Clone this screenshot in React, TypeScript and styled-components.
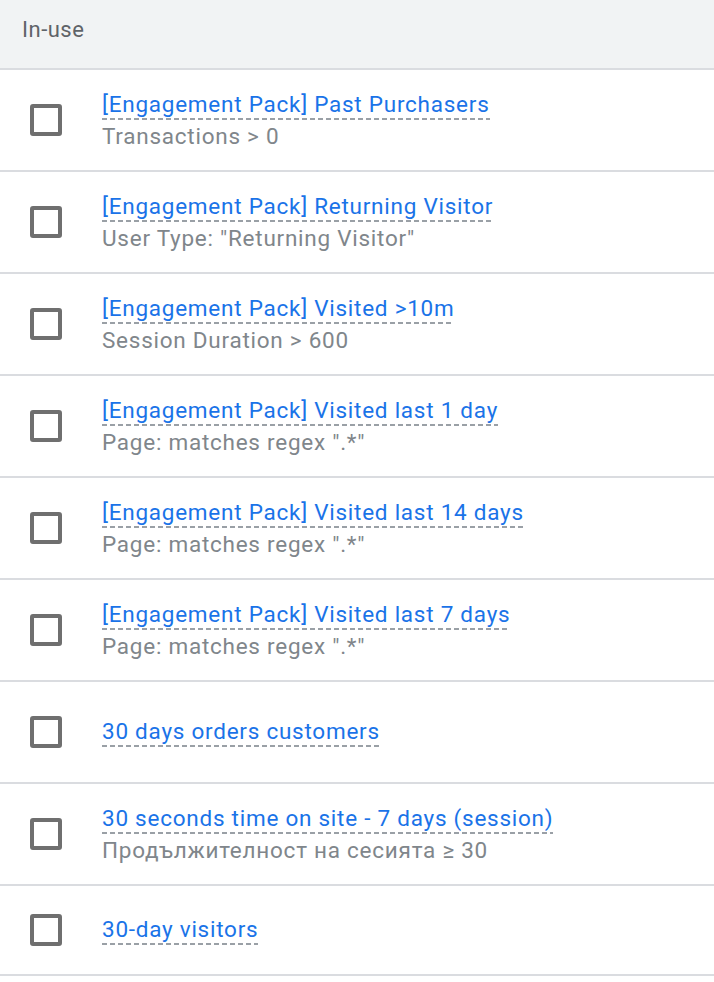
import React from 'react';
import styled, { createGlobalStyle } from 'styled-components';

const GlobalStyle = createGlobalStyle`
  body {
    margin: 0;
    background: #fff;
    font-family: Roboto, "Noto Sans", sans-serif;
  }
`;

const Panel = styled.div`
  width: 714px;
  background: #fff;
`;

const Header = styled.div`
  height: 58px;
  padding: 0 22px 10px;
  box-sizing: content-box;
  background: #f1f3f4;
  border-bottom: 2px solid #dadce0;
  display: flex;
  align-items: center;
  font-size: 22px;
  letter-spacing: 0.5px;
  color: #5f6368;
`;

const Row = styled.div<{ $height?: number }>`
  height: ${(p) => p.$height ?? 100}px;
  border-bottom: 2px solid #dadce0;
  display: flex;
  align-items: center;
`;

const CheckCell = styled.div`
  width: 102px;
  display: flex;
  padding-left: 30px;
  box-sizing: border-box;
  flex-shrink: 0;
`;

const Checkbox = styled.div`
  width: 32px;
  height: 32px;
  box-sizing: border-box;
  border: 4px solid #6f6f6f;
  border-radius: 3px;
`;

const Info = styled.div`
  display: flex;
  flex-direction: column;
  align-items: flex-start;
  gap: 2px;
`;

const Title = styled.span`
  font-size: 22.5px;
  letter-spacing: 0.75px;
  line-height: 27px;
  color: #1a73e8;
  padding-bottom: 2px;
  background-image: linear-gradient(to right, #9aa0a6 5px, transparent 5px);
  background-size: 8px 2px;
  background-repeat: repeat-x;
  background-position: 0 100%;
`;

const Subtitle = styled.span`
  font-size: 22.5px;
  letter-spacing: 0.75px;
  line-height: 28px;
  color: #80868b;
`;

type Segment = { title: string; detail?: string };

const segments: Segment[] = [
  { title: '[Engagement Pack] Past Purchasers', detail: 'Transactions > 0' },
  { title: '[Engagement Pack] Returning Visitor', detail: 'User Type: "Returning Visitor"' },
  { title: '[Engagement Pack] Visited >10m', detail: 'Session Duration > 600' },
  { title: '[Engagement Pack] Visited last 1 day', detail: 'Page: matches regex ".*"' },
  { title: '[Engagement Pack] Visited last 14 days', detail: 'Page: matches regex ".*"' },
  { title: '[Engagement Pack] Visited last 7 days', detail: 'Page: matches regex ".*"' },
  { title: '30 days orders customers' },
  { title: '30 seconds time on site - 7 days (session)', detail: 'Продължителност на сесията ≥ 30' },
  { title: '30-day visitors' },
];

const App: React.FC = () => {
  return (
    <>
      <GlobalStyle />
      <Panel>
        <Header>In-use</Header>
        {segments.map((s, i) => (
          <Row key={s.title} $height={i === segments.length - 1 ? 88 : 100}>
            <CheckCell>
              <Checkbox />
            </CheckCell>
            <Info>
              <Title>{s.title}</Title>
              {s.detail && <Subtitle>{s.detail}</Subtitle>}
            </Info>
          </Row>
        ))}
      </Panel>
    </>
  );
};

export default App;
